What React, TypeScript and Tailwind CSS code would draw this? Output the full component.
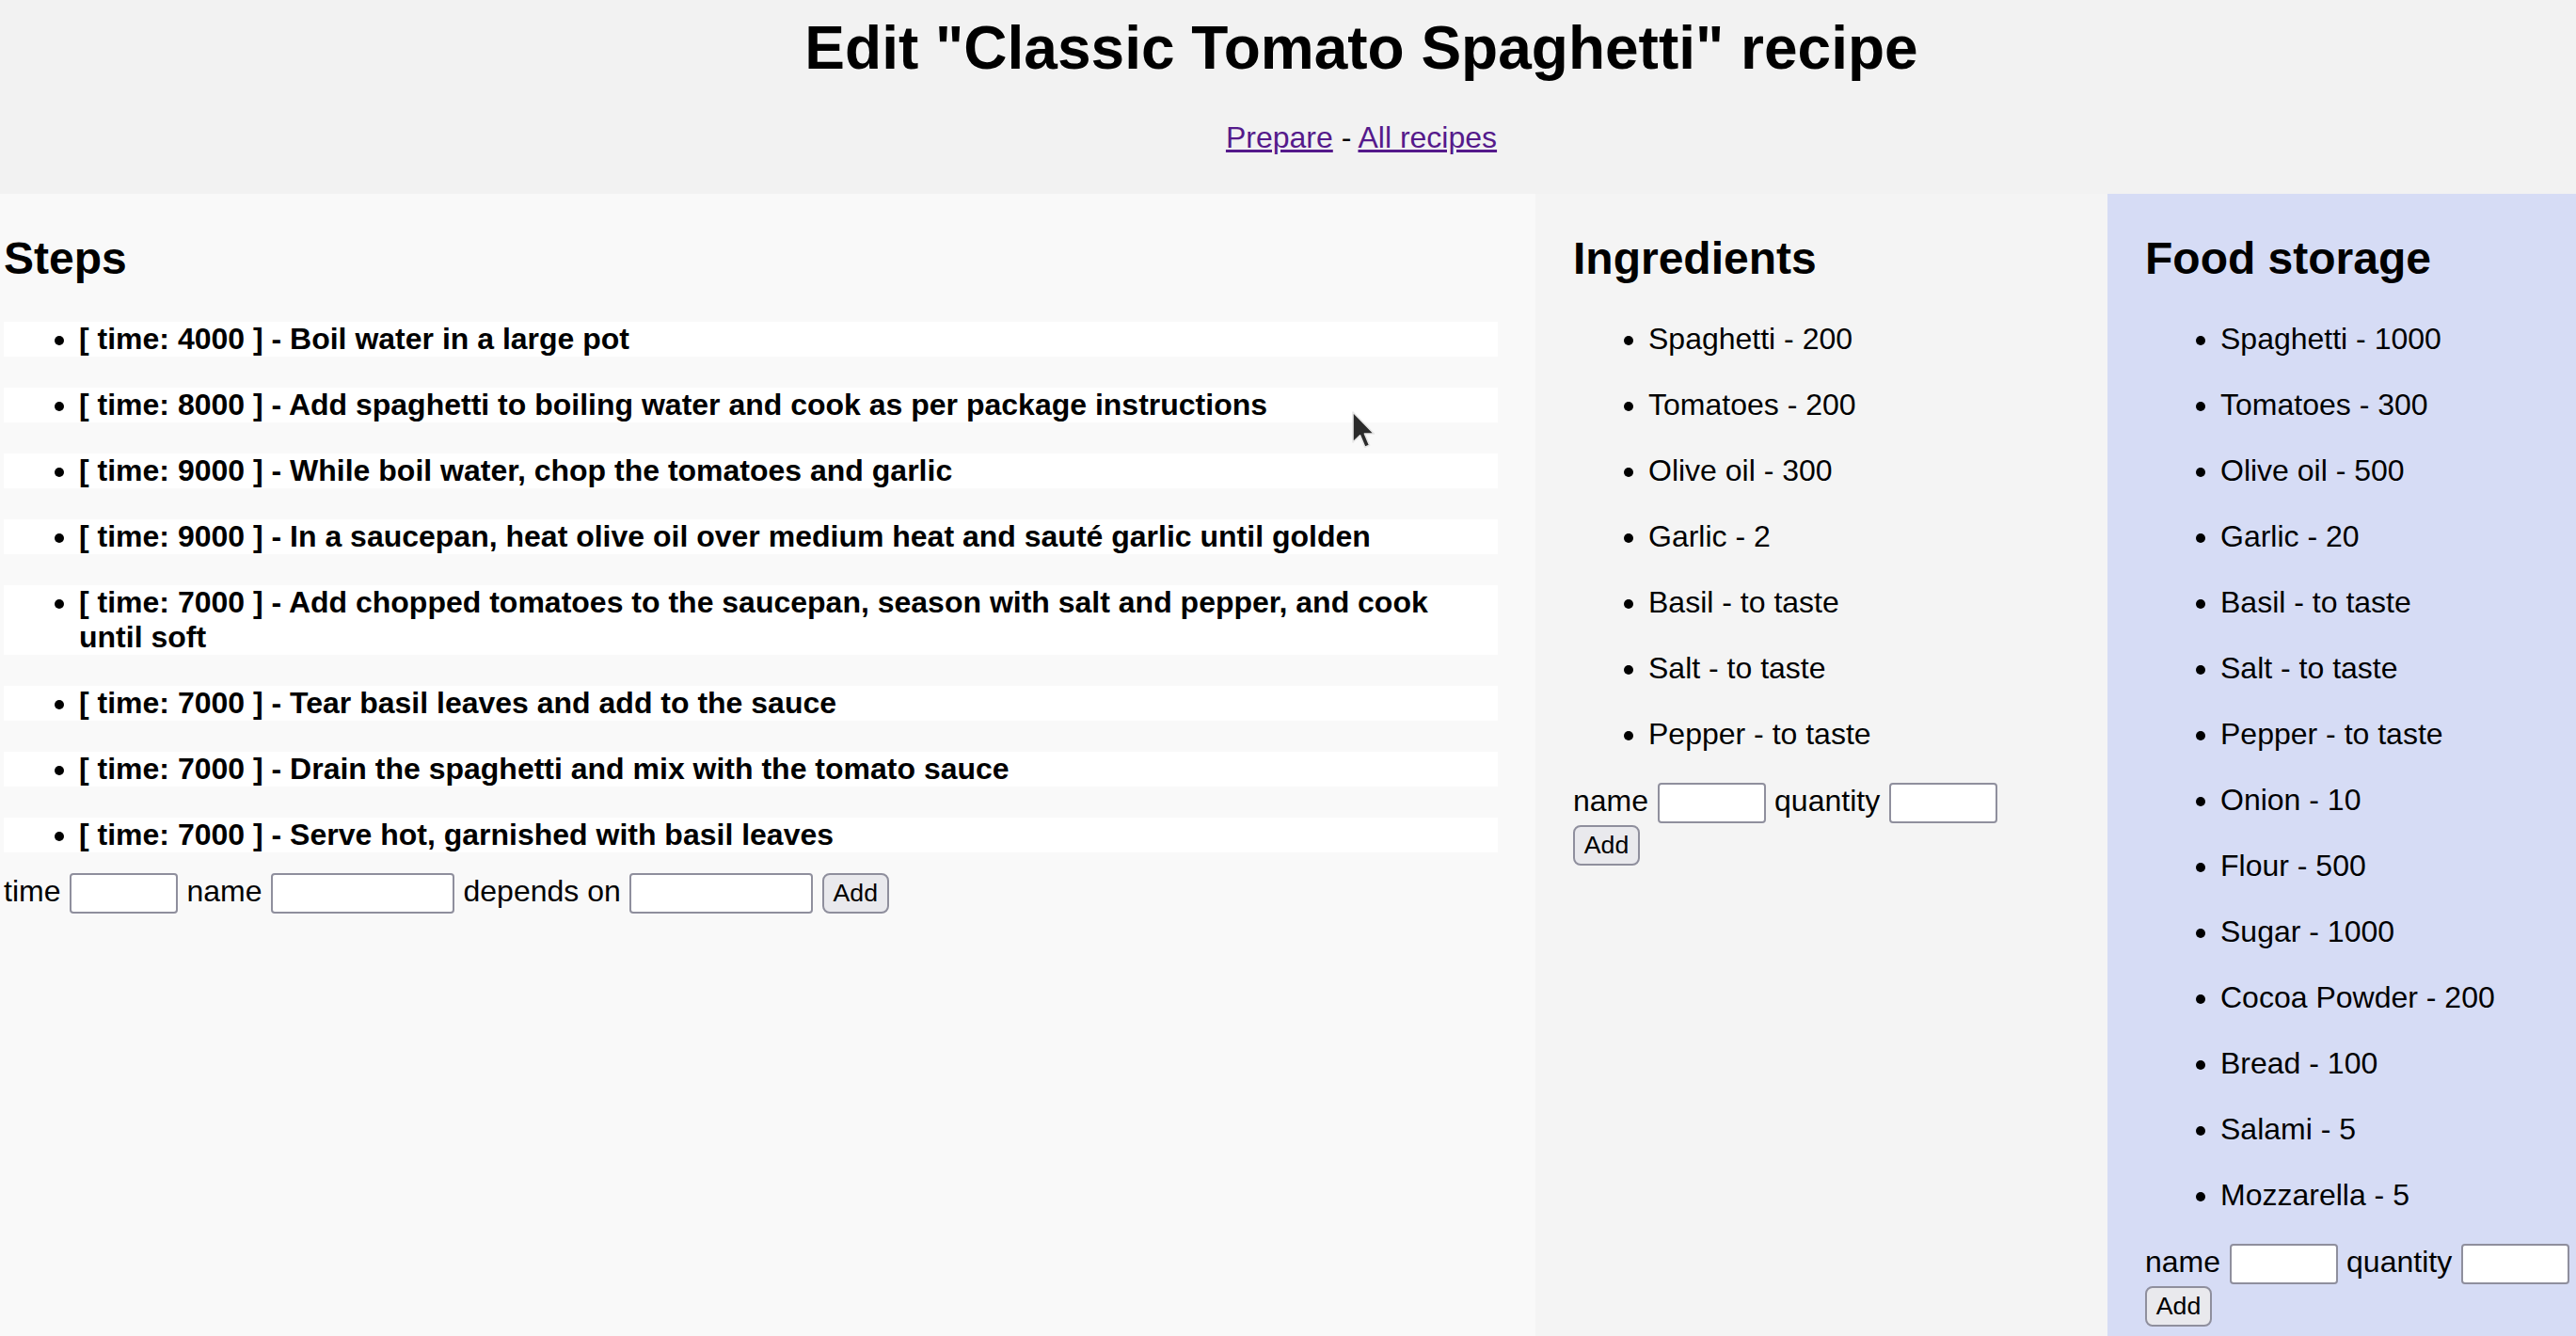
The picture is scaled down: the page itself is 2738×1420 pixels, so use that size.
import React from "react";

const steps: string[] = [
  "[ time: 4000 ] - Boil water in a large pot",
  "[ time: 8000 ] - Add spaghetti to boiling water and cook as per package instructions",
  "[ time: 9000 ] - While boil water, chop the tomatoes and garlic",
  "[ time: 9000 ] - In a saucepan, heat olive oil over medium heat and sauté garlic until golden",
  "[ time: 7000 ] - Add chopped tomatoes to the saucepan, season with salt and pepper, and cook until soft",
  "[ time: 7000 ] - Tear basil leaves and add to the sauce",
  "[ time: 7000 ] - Drain the spaghetti and mix with the tomato sauce",
  "[ time: 7000 ] - Serve hot, garnished with basil leaves",
];

const ingredients: string[] = [
  "Spaghetti - 200",
  "Tomatoes - 200",
  "Olive oil - 300",
  "Garlic - 2",
  "Basil - to taste",
  "Salt - to taste",
  "Pepper - to taste",
];

const storage: string[] = [
  "Spaghetti - 1000",
  "Tomatoes - 300",
  "Olive oil - 500",
  "Garlic - 20",
  "Basil - to taste",
  "Salt - to taste",
  "Pepper - to taste",
  "Onion - 10",
  "Flour - 500",
  "Sugar - 1000",
  "Cocoa Powder - 200",
  "Bread - 100",
  "Salami - 5",
  "Mozzarella - 5",
];

function TextInput({ wide }: { wide?: boolean }) {
  return (
    <input
      type="text"
      className={
        wide
          ? "h-[43px] w-[195px] shrink-0 rounded-[4px] border-2 border-[#8f8f9d] bg-white px-[4px] text-[26.67px]"
          : "h-[43px] w-[115px] shrink-0 rounded-[4px] border-2 border-[#8f8f9d] bg-white px-[4px] text-[26.67px]"
      }
    />
  );
}

function AddButton() {
  return (
    <button
      type="button"
      className="flex h-[43px] w-[71px] shrink-0 items-center justify-center rounded-[8px] border-2 border-[#8f8f9d] bg-[#e9e9ed] text-[26.67px] leading-[31px] text-black"
    >
      Add
    </button>
  );
}

function Label({ children }: { children: React.ReactNode }) {
  return <span className="mt-[1px] shrink-0 text-[32px] leading-[37px] whitespace-nowrap">{children}</span>;
}

function SimpleList({ items }: { items: string[] }) {
  return (
    <ul className="mt-[40px] flex list-disc flex-col gap-[33px] pl-[80px]">
      {items.map((it) => (
        <li key={it} className="text-[32px] leading-[37px]">
          {it}
        </li>
      ))}
    </ul>
  );
}

function QuantityForm() {
  return (
    <div className="mt-[33px] flex flex-col gap-[2px]">
      <div className="flex items-start gap-[9.5px] whitespace-nowrap">
        <Label>name</Label>
        <TextInput />
        <Label>quantity</Label>
        <TextInput />
      </div>
      <div className="flex">
        <AddButton />
      </div>
    </div>
  );
}

export default function App() {
  return (
    <div className="relative min-h-[1420px] bg-[#f9f9f9] font-['Liberation_Sans',Arial,sans-serif] text-black">
      <div className="bg-[#f2f2f2] pt-[14px] pb-[41px] pl-[156px] text-center">
        <h1 className="m-0 text-[64px] font-bold leading-[74px]">Edit "Classic Tomato Spaghetti" recipe</h1>
        <div className="mt-[40px] text-[32px] leading-[37px]">
          <a href="#" className="text-[#551a8b] underline">
            Prepare
          </a>{" "}
          -{" "}
          <a href="#" className="text-[#551a8b] underline">
            All recipes
          </a>
        </div>
      </div>

      <div className="flex min-h-[1214px]">
        <div className="w-[1632px] shrink-0 bg-[#f9f9f9] pt-[41px] pr-[40px] pl-[4px]">
          <h2 className="text-[48px] font-bold leading-[55px]">Steps</h2>
          <div className="mt-[40px] flex flex-col gap-[33px]">
            {steps.map((s) => (
              <div key={s} className="bg-white">
                <ul className="list-disc pl-[80px]">
                  <li className="text-[32px] font-bold leading-[37px]">{s}</li>
                </ul>
              </div>
            ))}
          </div>
          <div className="mt-[22px] flex items-start gap-[9.5px]">
            <Label>time</Label>
            <TextInput />
            <Label>name</Label>
            <TextInput wide />
            <Label>depends on</Label>
            <TextInput wide />
            <AddButton />
          </div>
        </div>

        <div className="w-[608px] shrink-0 bg-[#f4f4f4] px-[40px] pt-[41px]">
          <h2 className="text-[48px] font-bold leading-[55px]">Ingredients</h2>
          <SimpleList items={ingredients} />
          <QuantityForm />
        </div>

        <div className="min-w-0 flex-1 bg-[#d6dcf5] px-[40px] pt-[41px]">
          <h2 className="text-[48px] font-bold leading-[55px]">Food storage</h2>
          <SimpleList items={storage} />
          <QuantityForm />
        </div>
      </div>

      <svg
        className="pointer-events-none absolute left-[1436px] top-[436px]"
        width="28"
        height="44"
        viewBox="0 0 14 22"
      >
        <path
          d="M1 1 L1 17 L4.8 13.4 L7.4 19.6 L9.8 18.6 L7.2 12.5 L12.2 12.5 Z"
          fill="#2b2b2b"
          stroke="#e6e6e6"
          strokeWidth="0.8"
          strokeLinejoin="round"
        />
      </svg>
    </div>
  );
}
